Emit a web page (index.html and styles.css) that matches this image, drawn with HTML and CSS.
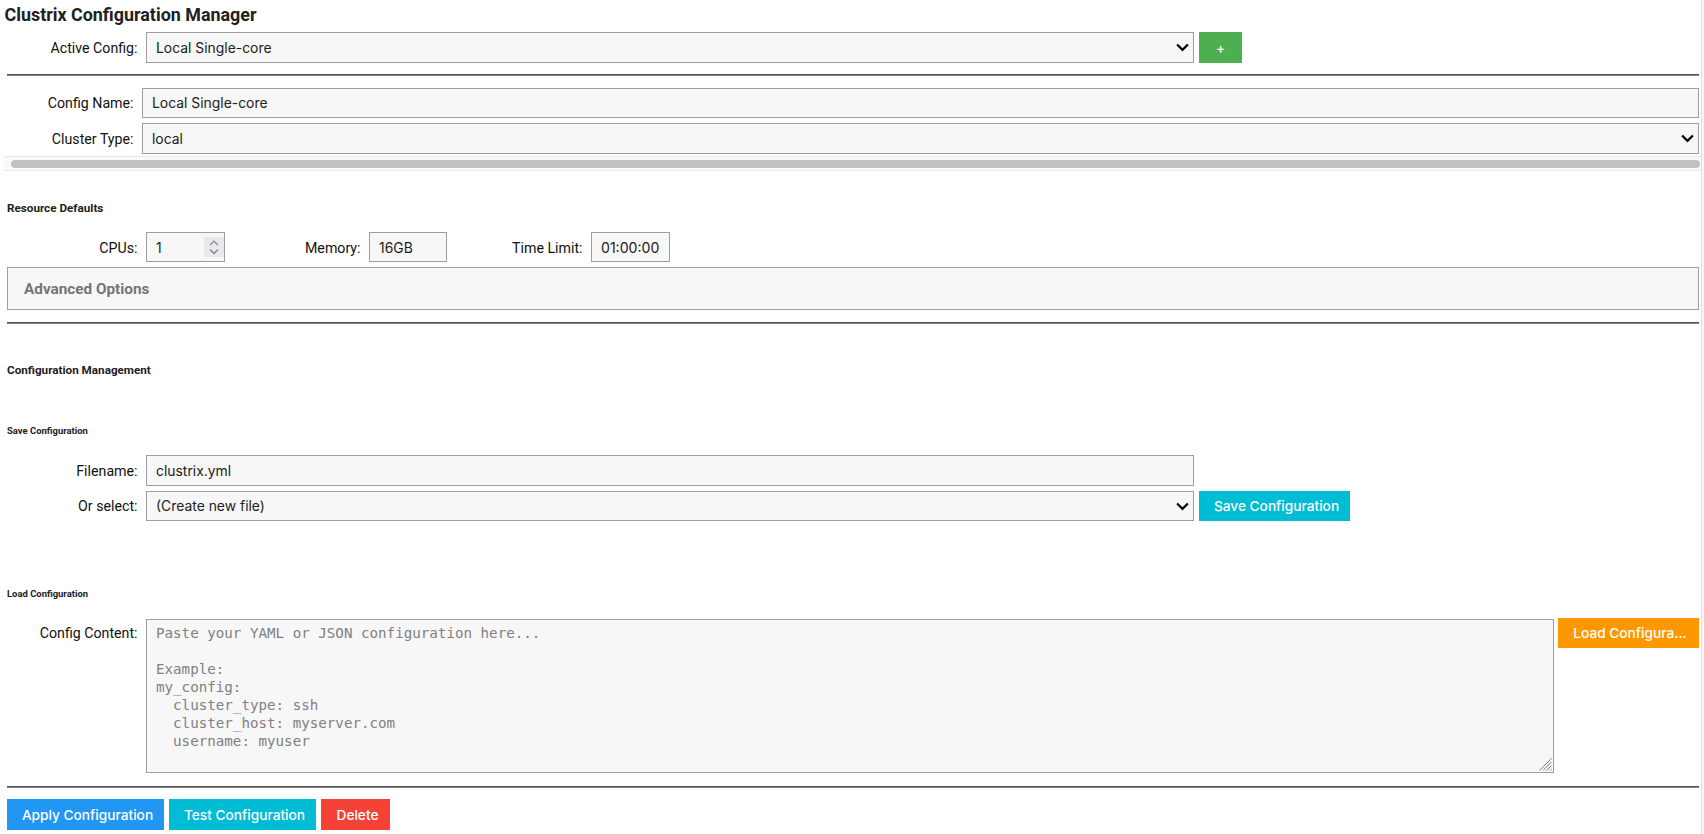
FILE: index.html
```html
<!DOCTYPE html>
<html lang="en">
<head>
<meta charset="utf-8">
<title>Clustrix Configuration Manager</title>
<link rel="stylesheet" href="styles.css">
</head>
<body>
<main class="panel">
  <h1 class="title">Clustrix Configuration Manager</h1>
  <div class="row row-active">
    <label class="label">Active Config:</label>
    <div class="field field-wide"><span class="value">Local Single-core</span><svg class="chevron" viewBox="0 0 12 8"><path d="M1 1.2 6 6.2 11 1.2"/></svg></div>
    <button class="btn btn-add">+</button>
  </div>
  <div class="rule"></div>
  <section class="scroller">
    <div class="row row-name"><label class="label">Config Name:</label><div class="field field-fill"><span class="value">Local Single-core</span></div></div>
    <div class="row row-type"><label class="label">Cluster Type:</label><div class="field field-fill"><span class="value">local</span><svg class="chevron" viewBox="0 0 12 8"><path d="M1 1.2 6 6.2 11 1.2"/></svg></div></div>
    <div class="track"><div class="thumb"></div></div>
  </section>
  <h2 class="heading heading-resources">Resource Defaults</h2>
  <div class="row row-resources">
    <label class="label">CPUs:</label>
    <div class="field field-small field-cpu"><span class="value">1</span><span class="spinner"><svg viewBox="0 0 20 20"><path d="M6 8 10 4.2 14 8M6 12.6 10 16.4 14 12.6"/></svg></span></div>
    <label class="label label-memory">Memory:</label>
    <div class="field field-small field-memory"><span class="value">16GB</span></div>
    <label class="label label-time">Time Limit:</label>
    <div class="field field-small field-time"><span class="value">01:00:00</span></div>
  </div>
  <div class="accordion">Advanced Options</div>
  <div class="rule"></div>
  <h2 class="heading heading-management">Configuration Management</h2>
  <h3 class="subheading sub-save">Save Configuration</h3>
  <div class="row row-file"><label class="label">Filename:</label><div class="field field-wide"><span class="value">clustrix.yml</span></div></div>
  <div class="row row-select">
    <label class="label">Or select:</label>
    <div class="field field-wide"><span class="value">(Create new file)</span><svg class="chevron" viewBox="0 0 12 8"><path d="M1 1.2 6 6.2 11 1.2"/></svg></div>
    <button class="btn btn-save">Save Configuration</button>
  </div>
  <h3 class="subheading sub-load">Load Configuration</h3>
  <div class="row row-content">
    <label class="label">Config Content:</label>
    <div class="content-box"><pre class="sample">Paste your YAML or JSON configuration here...

Example:
my_config:
  cluster_type: ssh
  cluster_host: myserver.com
  username: myuser</pre><svg class="grip" viewBox="0 0 14 14"><path d="M0.5 12.5 12.5 0.5M4 12.5 12.5 4M7.5 12.5 12.5 7.5M11 12.5 12.5 11"/></svg></div>
    <button class="btn btn-load">Load Configura...</button>
  </div>
  <div class="rule"></div>
  <div class="actions">
    <button class="btn btn-apply">Apply Configuration</button>
    <button class="btn btn-test">Test Configuration</button>
    <button class="btn btn-delete">Delete</button>
  </div>
</main>
</body>
</html>
```
FILE: styles.css
```css
* { box-sizing: border-box; }
body { margin: 0; height: 834px; overflow: hidden; background: #fff; color: #212121; font: 13.9px/20px Inter, sans-serif; }
.panel { width: 1702px; height: 834px; padding-left: 7px; border-right: 1px solid #e0e0e0; box-shadow: 2px 0 #f7f7f7; }
.title { margin: 0 0 0 -2.5px; height: 32px; padding-top: 4px; font: 700 17.9px/22px Roboto, sans-serif; }
.row { display: flex; align-items: flex-start; }
.label { flex: none; width: 139px; padding-right: 8.5px; font: 14.2px/32px Roboto, sans-serif; text-align: right; color: #111; white-space: nowrap; }
.field { display: flex; align-items: center; justify-content: space-between; height: 30px; padding: 0 4px 0 9px; border: 1px solid #9e9e9e; background: #f7f7f7; white-space: nowrap; }
.field-wide { width: 1048px; }
.field-fill { width: 1557px; }
.field-small { width: 79px; padding-top: 1px; }
.field-memory { width: 78px; }
.field-time { font-size: 14.1px; }
.chevron { width: 13px; height: 9px; fill: none; stroke: #000; stroke-width: 2; }
.btn { height: 30px; margin: 0; padding: 0 0 0 4px; border: 0; border-radius: 0; color: #fff; font: 500 13.7px/30px Inter, sans-serif; white-space: nowrap; }
.rule { width: 1692px; height: 2px; border-top: 1px solid #505050; background: #868686; }
.row-active { height: 42px; }
.row-active .field, .row-active .btn { height: 31px; }
.btn-add { width: 43px; margin-left: 5px; padding: 0; background: #4caf50; }
.scroller { height: 95px; padding-top: 12px; }
.scroller .label { width: 135px; line-height: 31px; }
.row-name { height: 35px; }
.row-type { height: 33px; }
.row-type .field { height: 31px; }
.scroller .row-type .label { line-height: 33px; }
.track { width: 1697px; height: 15px; margin-left: -3px; padding: 3px 1px 0 7px; border: solid #e8e8e8; border-width: 1px 0; background: #fafafa; }
.thumb { height: 8px; border-radius: 4px; background: #c1c1c1; }
.heading { margin: 0; font: 700 11.7px/16px Roboto, sans-serif; }
.heading-resources { height: 61px; padding-top: 29px; }
.row-resources { height: 35px; }
.field-cpu { padding-right: 0; padding-top: 0; }
.field-cpu .value { padding-top: 1px; }
.spinner { width: 20px; height: 20px; background: #e9e9ed; }
.spinner svg { display: block; width: 20px; height: 20px; fill: none; stroke: #8f8f9d; stroke-width: 1.5; }
.label-memory { width: 144px; }
.label-time { width: 144px; }
.accordion { width: 1692px; height: 43px; margin-bottom: 12px; padding-left: 16px; border: 1px solid #9e9e9e; background: #f7f7f7; color: #757575; font: 700 15.3px/42px Roboto, sans-serif; }
.heading-management { height: 98px; padding-top: 38px; }
.subheading { margin: 0; font: 700 9.45px/14px Roboto, sans-serif; }
.sub-save { height: 33px; padding-top: 2px; }
.row-file { height: 36px; }
.row-file .field { height: 31px; }
.row-select { height: 30px; }
.row-select .label { line-height: 30px; }
.btn-save { width: 151px; margin-left: 5px; background: #00bcd4; }
.sub-load { height: 97px; padding-top: 66px; }
.row-content { height: 168px; }
.row-content .label { line-height: 30px; }
.content-box { position: relative; width: 1408px; height: 154px; margin-top: 1px; padding: 4px 9px; border: 1px solid #9e9e9e; background: #f7f7f7; }
.sample { margin: 0; color: #808080; font: 14.2px/18px "DejaVu Sans Mono", monospace; }
.grip { position: absolute; right: 0; bottom: 0; width: 14px; height: 14px; fill: none; stroke: #777; stroke-width: 1; }
.btn-load { width: 141px; margin-left: 4px; padding-left: 3px; background: #ff9800; }
.actions { display: flex; gap: 5px; padding-top: 11px; }
.actions .btn { height: 31px; }
.btn-apply { width: 157px; background: #2196f3; }
.btn-test { width: 147px; background: #00bcd4; }
.btn-delete { width: 69px; background: #f44336; }
```
